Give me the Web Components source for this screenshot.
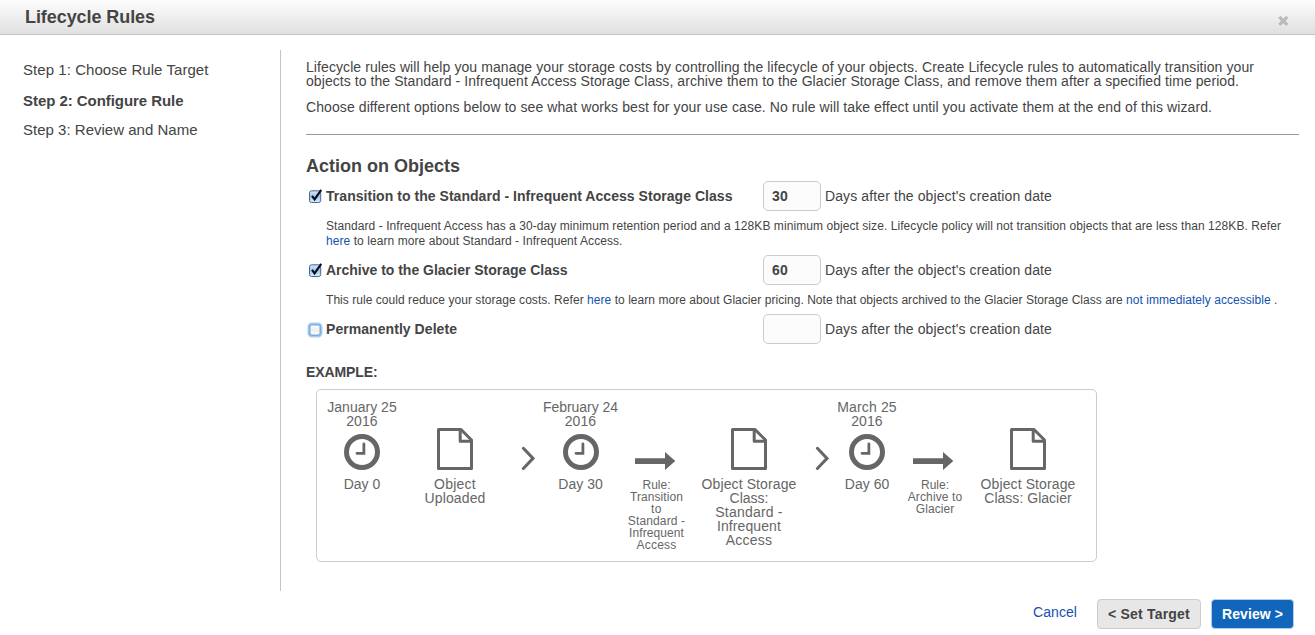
<!DOCTYPE html>
<html lang="en">
<head>
<meta charset="utf-8">
<title>Lifecycle Rules</title>
<style>
html,body{margin:0;height:100%;background:#fff;overflow:hidden}
body{font-family:"Liberation Sans",Arial,sans-serif;color:#444}
a{color:#1352b0;text-decoration:none}
</style>
</head>
<body>
<lifecycle-wizard></lifecycle-wizard>
<script>
const define = (name, html, init) => customElements.define(name, class extends HTMLElement {
  constructor() {
    super();
    this.attachShadow({mode: 'open'}).innerHTML = typeof html === 'function' ? '' : html;
    this.render = html;
  }
  connectedCallback() {
    if (typeof this.render === 'function') this.shadowRoot.innerHTML = this.render(this);
    if (init) init(this);
  }
});

// One line of text whose tracking is adjusted to fill the width in "w".
define('text-line', `<style>
:host{display:block;width:max-content;white-space:nowrap}
</style><slot></slot>`, el => {
  const w = parseFloat(el.getAttribute('w'));
  if (!w) return;
  const n = el.textContent.length;
  el.style.letterSpacing = (w - el.getBoundingClientRect().width) / n + 'px';
});

define('check-box', el => `<style>
:host{display:block;width:20px;height:30px}
svg{display:block}
</style><svg width="20" height="30" viewBox="0 0 20 30">
<defs><linearGradient id="g" x1="0" y1="0" x2="0" y2="1">
${el.hasAttribute('checked') ? '<stop offset="0" stop-color="#d6e8fa"/><stop offset=".5" stop-color="#9cc6ee"/><stop offset="1" stop-color="#d8f1ff"/>' : '<stop offset="0" stop-color="#fff"/><stop offset=".5" stop-color="#eee"/><stop offset="1" stop-color="#fff"/>'}
</linearGradient></defs>
${el.hasAttribute('checked')
 ? '<rect x="3.5" y="9.8" width="11.2" height="11.7" rx="2" fill="url(#g)" stroke="#4c6692"/><path d="M6 14.8L8.6 18.4L15.2 8.8" fill="none" stroke="#0a0a14" stroke-width="2.1"/>'
 : '<rect x="2.4" y="9.4" width="13.2" height="13.2" rx="3.5" fill="none" stroke="#a9cdf0" stroke-width="1.8"/><rect x="3.7" y="10.7" width="10.6" height="10.6" rx="2.2" fill="url(#g)" stroke="#7badde" stroke-width="1.6"/>'}
</svg>`);

define('day-input', `<style>
:host{display:block;box-sizing:border-box;width:58px;height:30px;border:1px solid #ccc;border-radius:5px;background:#fcfcfc;font:bold 14px/28px "Liberation Sans",Arial,sans-serif;padding-left:8px}
</style><slot></slot>`);

define('rule-row', el => `<style>
:host{display:grid;grid-template-columns:20px 437px 58px auto;height:30px;font-size:14px;line-height:30px}
.l{font-weight:bold}
.d{margin-left:4px}
</style>
<check-box ${el.hasAttribute('checked') ? 'checked' : ''}></check-box>
<text-line class="l" w="${el.getAttribute('w')}">${el.getAttribute('label')}</text-line>
<day-input>${el.getAttribute('days') ? `<text-line w="16">${el.getAttribute('days')}</text-line>` : ''}</day-input>
<text-line class="d" w="227">Days after the object's creation date</text-line>`);

const icons = {
  clock: '<svg width="36" height="36" viewBox="0 0 36 36" fill="none" stroke="#666"><circle cx="18" cy="18" r="15.5" stroke-width="5"/><path d="M19.9 10v9.3H13" stroke-width="2.8" stroke-linecap="round"/></svg>',
  doc: '<svg width="38" height="42" viewBox="0 0 38 42" fill="none" stroke="#666" stroke-width="3" stroke-linejoin="round"><path d="M2.5 1.5H25L35.5 12V40.5H2.5Z"/><path d="M24.2 2V13.3H35"/></svg>',
  chevron: '<svg width="14" height="24" viewBox="0 0 14 24" fill="none" stroke="#666" stroke-width="3" stroke-linecap="round"><path d="M2.4 2.3L12 12.4L2.4 22.5"/></svg>',
  arrow: '<svg width="46" height="18" viewBox="0 0 46 18" fill="#666"><path d="M1 6.2H31V0L41.3 9L31 18V12H1Z"/></svg>'
};
define('flow-step', el => `<style>
:host{display:flex;flex-direction:column;align-items:center;min-width:0;color:#666;font-size:14px;line-height:14px}
.top{height:28px;display:flex;flex-direction:column;align-items:center}
.icon{height:42px;display:flex;align-items:flex-end;margin-bottom:7px}
svg{display:block}
.cap{display:flex;flex-direction:column;align-items:center}
:host([icon=arrow]) .cap{font-size:12px;line-height:12px;padding-top:2px}
</style>
<div class="top"><slot name="date"></slot></div>
<div class="icon">${icons[el.getAttribute('icon')]}</div>
<div class="cap"><slot></slot></div>`);

define('flow-example', `<style>
:host{display:grid;grid-template-columns:90px 96px 50px 55px 97px 88px 58px 32px 104px 82px;box-sizing:border-box;width:781px;height:173px;margin:10px 0 0 10px;padding-top:10px;border:1px solid #ccc;border-radius:5px}
</style>
<flow-step icon="clock"><text-line slot="date" w="69.5">January 25</text-line><text-line slot="date" w="31.5">2016</text-line><text-line w="36.5">Day 0</text-line></flow-step>
<flow-step icon="doc"><text-line w="42">Object</text-line><text-line w="61">Uploaded</text-line></flow-step>
<flow-step icon="chevron"></flow-step>
<flow-step icon="clock"><text-line slot="date" w="75">February 24</text-line><text-line slot="date" w="31.5">2016</text-line><text-line w="44.5">Day 30</text-line></flow-step>
<flow-step icon="arrow"><text-line w="28">Rule:</text-line><text-line w="53">Transition</text-line><text-line w="11">to</text-line><text-line w="57.5">Standard -</text-line><text-line w="55">Infrequent</text-line><text-line w="40">Access</text-line></flow-step>
<flow-step icon="doc"><text-line w="95">Object Storage</text-line><text-line w="39">Class:</text-line><text-line w="67.5">Standard -</text-line><text-line w="64">Infrequent</text-line><text-line w="46.5">Access</text-line></flow-step>
<flow-step icon="chevron"></flow-step>
<flow-step icon="clock"><text-line slot="date" w="59.5">March 25</text-line><text-line slot="date" w="31.5">2016</text-line><text-line w="44.5">Day 60</text-line></flow-step>
<flow-step icon="arrow"><text-line w="28">Rule:</text-line><text-line w="54.5">Archive to</text-line><text-line w="38.5">Glacier</text-line></flow-step>
<flow-step icon="doc"><text-line w="95">Object Storage</text-line><text-line w="87.5">Class: Glacier</text-line></flow-step>`);

define('dialog-header', `<style>
:host{display:flex;justify-content:space-between;box-sizing:border-box;height:35px;padding:0 26px 0 25px;border-bottom:1px solid #c4c4c4;background:linear-gradient(#fdfdfd,#e0e0e0);font-weight:bold;font-size:18px;line-height:34px}
svg{display:block;margin-top:16px}
</style><slot></slot>
<svg width="11" height="10" viewBox="0 0 11 10"><path d="M1.3 .9L9.3 8.9M9.3 .9L1.3 8.9" stroke="#b9b9b9" stroke-width="3"/></svg>`);

define('step-list', `<style>
:host{display:block;box-sizing:border-box;width:281px;height:541px;border-right:1px solid #c4c4c4;padding:10px 0 0 23px;font-size:15px;line-height:20px}
text-line{margin-bottom:10px}
.on{font-weight:bold;margin:11px 0 9px}
</style>
<text-line w="185.5">Step 1: Choose Rule Target</text-line>
<text-line class="on" w="160.5">Step 2: Configure Rule</text-line>
<text-line w="174.5">Step 3: Review and Name</text-line>`);

define('wizard-button', `<style>
:host{display:flex;justify-content:center;box-sizing:border-box;height:30px;border:1px solid #ccc;border-radius:4px;background:#e7e7e7;color:#444;font-weight:bold;font-size:14px;line-height:29px}
:host([primary]){background:#1166bb;border-color:#b4cde6;color:#fff}
</style><slot></slot>`);

define('wizard-footer', `<style>
:host{display:flex;justify-content:flex-end;padding:8px 21px 0 0;font-size:14px}
.c{color:#1352b0;line-height:26px;margin-right:20px}
.s{width:104px;margin-right:10px}
.r{width:83px}
</style>
<text-line class="c" w="44">Cancel</text-line>
<wizard-button class="s"><text-line w="82">&lt; Set Target</text-line></wizard-button>
<wizard-button class="r" primary><text-line w="61">Review &gt;</text-line></wizard-button>`);

define('rule-form', `<style>
:host{display:block;flex:1;padding:10px 16px 0 25px;font-size:14px;line-height:14px}
a{color:#1352b0}
.p{margin-top:12px}
hr{margin:20px 0 21px;border:0;height:1px;background:#999}
.h{font-size:18px;line-height:20px;font-weight:bold;margin-bottom:5px}
.note{font-size:12px;line-height:15px;margin:8px 0 6px 20px}
.ex{font-weight:bold;margin-top:21px}
</style>
<text-line w="948">Lifecycle rules will help you manage your storage costs by controlling the lifecycle of your objects. Create Lifecycle rules to automatically transition your</text-line>
<text-line w="933">objects to the Standard - Infrequent Access Storage Class, archive them to the Glacier Storage Class, and remove them after a specified time period.</text-line>
<text-line class="p" w="906">Choose different options below to see what works best for your use case. No rule will take effect until you activate them at the end of this wizard.</text-line>
<hr>
<text-line class="h" w="154">Action on Objects</text-line>
<rule-row checked label="Transition to the Standard - Infrequent Access Storage Class" w="406.5" days="30"></rule-row>
<div class="note"><text-line w="955">Standard - Infrequent Access has a 30-day minimum retention period and a 128KB minimum object size. Lifecycle policy will not transition objects that are less than 128KB. Refer</text-line>
<text-line w="296.5"><a>here</a> to learn more about Standard - Infrequent Access.</text-line></div>
<rule-row checked label="Archive to the Glacier Storage Class" w="241.5" days="60"></rule-row>
<div class="note"><text-line w="951.5">This rule could reduce your storage costs. Refer <a>here</a> to learn more about Glacier pricing. Note that objects archived to the Glacier Storage Class are <a>not immediately accessible</a> .</text-line></div>
<rule-row label="Permanently Delete" w="131"></rule-row>
<text-line class="ex" w="71.5">EXAMPLE:</text-line>
<flow-example></flow-example>`);

define('lifecycle-wizard', `<style>
:host{display:block;height:635px;width:1315px;overflow:hidden;background:#fff}
.body{display:flex;margin-top:15px;height:541px}
</style>
<dialog-header><text-line w="130">Lifecycle Rules</text-line></dialog-header>
<div class="body"><step-list></step-list><rule-form></rule-form></div>
<wizard-footer></wizard-footer>`);
</script>
</body>
</html>
